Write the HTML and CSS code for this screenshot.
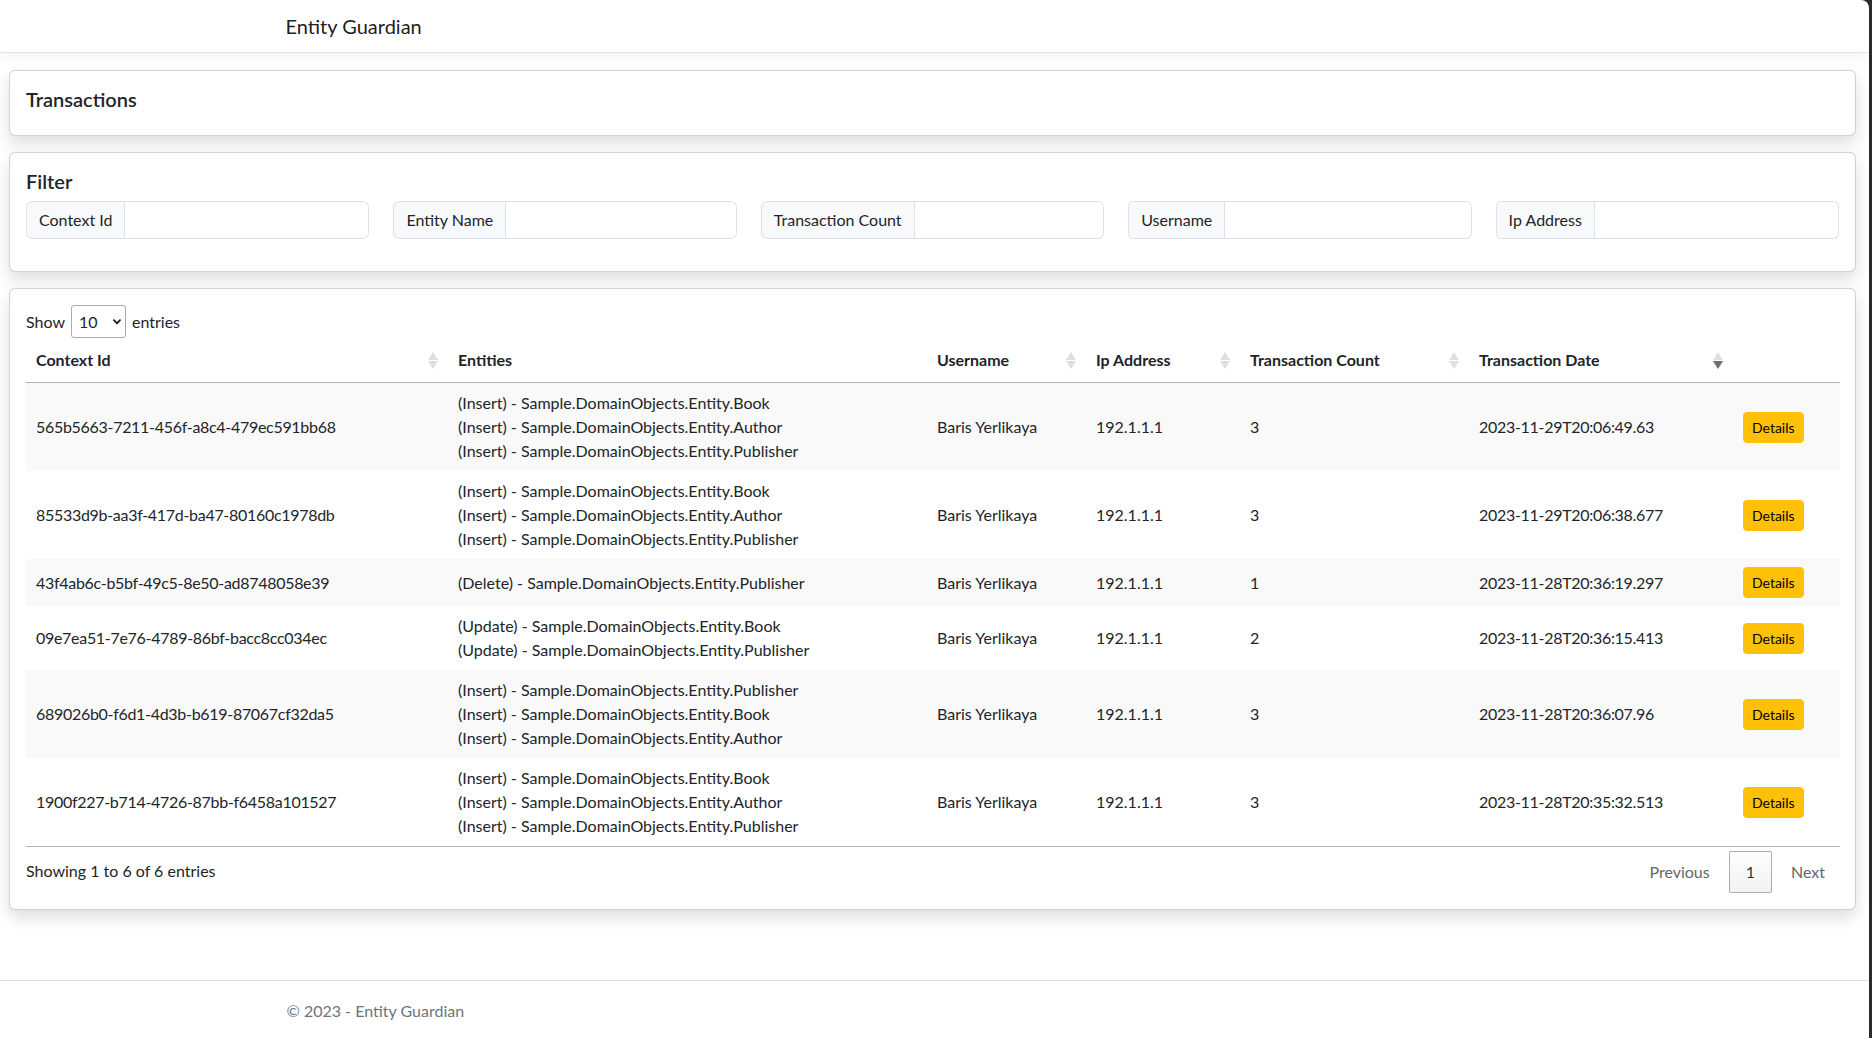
FILE: index.html
```html
<!DOCTYPE html>
<html lang="en">
<head>
<meta charset="utf-8">
<title>Transactions - Entity Guardian</title>
<link rel="stylesheet" href="styles.css">
</head>
<body>
<header class="topbar">
  <div class="container"><a class="brand" href="#">Entity Guardian</a></div>
</header>
<main class="main">
  <section class="card">
    <div class="card-body">
      <h5 class="card-title">Transactions</h5>
    </div>
  </section>
  <section class="card">
    <div class="card-body">
      <h5 class="card-title">Filter</h5>
      <div class="filter-grid">
        <div class="input-group"><span class="ig-label">Context Id</span><input class="ig-input" type="text"></div>
        <div class="input-group"><span class="ig-label">Entity Name</span><input class="ig-input" type="text"></div>
        <div class="input-group"><span class="ig-label">Transaction Count</span><input class="ig-input" type="text"></div>
        <div class="input-group"><span class="ig-label">Username</span><input class="ig-input" type="text"></div>
        <div class="input-group"><span class="ig-label">Ip Address</span><input class="ig-input" type="text"></div>
      </div>
    </div>
  </section>
  <section class="card">
    <div class="card-body">
      <div class="dt-length">
        <span>Show</span>
        <span class="select-wrap">
          <select class="dt-select"><option>10</option><option>25</option><option>50</option><option>100</option></select>
          <svg class="chev" viewBox="0 0 8 6" width="8" height="6"><path d="M1 1.2 L4 4.4 L7 1.2" fill="none" stroke="#222" stroke-width="1.9" stroke-linecap="round" stroke-linejoin="round"/></svg>
        </span>
        <span>entries</span>
      </div>
      <table class="dt">
        <colgroup>
          <col class="c-id"><col class="c-ent"><col class="c-user"><col class="c-ip"><col class="c-count"><col class="c-date"><col class="c-act">
        </colgroup>
        <thead>
          <tr>
            <th class="sortable">Context Id</th>
            <th>Entities</th>
            <th class="sortable">Username</th>
            <th class="sortable">Ip Address</th>
            <th class="sortable">Transaction Count</th>
            <th class="sortable sorted-desc">Transaction Date</th>
            <th></th>
          </tr>
        </thead>
        <tbody>
          <tr>
            <td class="num">565b5663-7211-456f-a8c4-479ec591bb68</td>
            <td><div>(Insert) - Sample.DomainObjects.Entity.Book</div><div>(Insert) - Sample.DomainObjects.Entity.Author</div><div>(Insert) - Sample.DomainObjects.Entity.Publisher</div></td>
            <td>Baris Yerlikaya</td>
            <td>192.1.1.1</td>
            <td>3</td>
            <td class="num">2023-11-29T20:06:49.63</td>
            <td><a class="btn-details" href="#">Details</a></td>
          </tr>
          <tr>
            <td class="num">85533d9b-aa3f-417d-ba47-80160c1978db</td>
            <td><div>(Insert) - Sample.DomainObjects.Entity.Book</div><div>(Insert) - Sample.DomainObjects.Entity.Author</div><div>(Insert) - Sample.DomainObjects.Entity.Publisher</div></td>
            <td>Baris Yerlikaya</td>
            <td>192.1.1.1</td>
            <td>3</td>
            <td class="num">2023-11-29T20:06:38.677</td>
            <td><a class="btn-details" href="#">Details</a></td>
          </tr>
          <tr>
            <td class="num">43f4ab6c-b5bf-49c5-8e50-ad8748058e39</td>
            <td><div>(Delete) - Sample.DomainObjects.Entity.Publisher</div></td>
            <td>Baris Yerlikaya</td>
            <td>192.1.1.1</td>
            <td>1</td>
            <td class="num">2023-11-28T20:36:19.297</td>
            <td><a class="btn-details" href="#">Details</a></td>
          </tr>
          <tr>
            <td class="num">09e7ea51-7e76-4789-86bf-bacc8cc034ec</td>
            <td><div>(Update) - Sample.DomainObjects.Entity.Book</div><div>(Update) - Sample.DomainObjects.Entity.Publisher</div></td>
            <td>Baris Yerlikaya</td>
            <td>192.1.1.1</td>
            <td>2</td>
            <td class="num">2023-11-28T20:36:15.413</td>
            <td><a class="btn-details" href="#">Details</a></td>
          </tr>
          <tr>
            <td class="num">689026b0-f6d1-4d3b-b619-87067cf32da5</td>
            <td><div>(Insert) - Sample.DomainObjects.Entity.Publisher</div><div>(Insert) - Sample.DomainObjects.Entity.Book</div><div>(Insert) - Sample.DomainObjects.Entity.Author</div></td>
            <td>Baris Yerlikaya</td>
            <td>192.1.1.1</td>
            <td>3</td>
            <td class="num">2023-11-28T20:36:07.96</td>
            <td><a class="btn-details" href="#">Details</a></td>
          </tr>
          <tr>
            <td class="num">1900f227-b714-4726-87bb-f6458a101527</td>
            <td><div>(Insert) - Sample.DomainObjects.Entity.Book</div><div>(Insert) - Sample.DomainObjects.Entity.Author</div><div>(Insert) - Sample.DomainObjects.Entity.Publisher</div></td>
            <td>Baris Yerlikaya</td>
            <td>192.1.1.1</td>
            <td>3</td>
            <td class="num">2023-11-28T20:35:32.513</td>
            <td><a class="btn-details" href="#">Details</a></td>
          </tr>
        </tbody>
      </table>
      <div class="dt-bottom">
        <div class="dt-info">Showing 1 to 6 of 6 entries</div>
        <div class="dt-paginate">
          <a class="pg-btn disabled">Previous</a>
          <a class="pg-btn current">1</a>
          <a class="pg-btn disabled">Next</a>
        </div>
      </div>
    </div>
  </section>
</main>
<footer class="footer">
  <div class="container">&copy; 2023 - Entity Guardian</div>
</footer>
</body>
</html>
```
FILE: styles.css
```css
html {
  background: #2b2b2b;
  height: 100%;
}

body {
  margin: 0 3px 0 0;
  min-height: 100vh;
  background: #fff;
  display: flex;
  flex-direction: column;
  font-family: "Segoe UI", Lato, "Noto Sans", sans-serif;
  font-size: 16px;
  line-height: 1.5;
  color: #212529;
  border-top-right-radius: 8px;
}

.container {
  width: 1320px;
  margin: 0 auto;
  padding: 0 12px;
  box-sizing: border-box;
}

.topbar {
  height: 52px;
  border-bottom: 1px solid #dee2e6;
  box-shadow: 0 4px 12px rgba(0, 0, 0, 0.05);
  display: flex;
  align-items: center;
  margin-bottom: 17px;
}

.brand {
  font-size: 20px;
  line-height: 30px;
  color: rgba(0, 0, 0, 0.9);
  text-decoration: none;
  margin-left: -1px;
}

.main {
  padding: 0 13px 0 9px;
}

.card {
  background: #fff;
  border: 1px solid rgba(0, 0, 0, 0.175);
  border-radius: 6px;
  box-shadow: 0 8px 16px rgba(0, 0, 0, 0.13);
  margin-bottom: 16px;
}

.card-body {
  padding: 16px;
}

.card-title {
  margin: 0 0 8px;
  font-size: 20px;
  font-weight: 600;
  line-height: 24px;
}

.filter-grid {
  display: grid;
  grid-template-columns: repeat(5, minmax(0, 1fr));
  gap: 24px;
  margin-bottom: 16px;
}

.input-group {
  display: flex;
  height: 38px;
  min-width: 0;
}

.ig-label {
  display: flex;
  align-items: center;
  padding: 0 12px;
  background: #f8f9fa;
  border: 1px solid #dee2e6;
  border-radius: 6px 0 0 6px;
  white-space: nowrap;
}

.ig-input {
  flex: 1 1 0;
  width: 0;
  min-width: 0;
  border: 1px solid #dee2e6;
  border-left: 0;
  border-radius: 0 6px 6px 0;
  padding: 0 12px;
  font: inherit;
  outline: none;
  background: #fff;
}

.dt-length {
  display: flex;
  align-items: center;
  gap: 6px;
  height: 33px;
}

.select-wrap {
  position: relative;
  display: inline-flex;
}

.dt-select {
  appearance: none;
  -webkit-appearance: none;
  width: 55px;
  height: 33px;
  border: 1px solid #aaa;
  border-radius: 3px;
  padding: 0 0 0 7px;
  background: transparent;
  font: inherit;
  color: #212529;
}

.chev {
  position: absolute;
  right: 5px;
  top: 14px;
  pointer-events: none;
}

.dt {
  width: 100%;
  table-layout: fixed;
  border-collapse: separate;
  border-spacing: 0;
  border-bottom: 1px solid rgba(0, 0, 0, 0.3);
}

.c-id { width: 422px; }
.c-ent { width: 479px; }
.c-user { width: 159px; }
.c-ip { width: 154px; }
.c-count { width: 229px; }
.c-date { width: 264px; }
.c-act { width: 107px; }

.dt th {
  position: relative;
  padding: 10px;
  text-align: left;
  font-weight: 700;
  line-height: 24px;
  border-bottom: 1px solid rgba(0, 0, 0, 0.3);
  white-space: nowrap;
}

.dt th.sortable::before,
.dt th.sortable::after {
  content: "";
  position: absolute;
  right: 10px;
  width: 0;
  height: 0;
  border-left: 5px solid transparent;
  border-right: 5px solid transparent;
}

.dt th.sortable::before {
  top: calc(50% - 8px);
  border-bottom: 8px solid #dfdfdf;
}

.dt th.sortable::after {
  top: calc(50% + 1px);
  border-top: 8px solid #dfdfdf;
}

.dt th.sorted-desc::after {
  border-top-color: #6f6f6f;
}

.dt td {
  padding: 8px 10px;
  line-height: 24px;
  vertical-align: middle;
}

.dt td.num {
  letter-spacing: -0.3px;
}

.dt tbody tr:nth-child(odd) td {
  background: #f9f9f9;
}

.btn-details {
  display: inline-block;
  padding: 4px 8px;
  font-size: 14px;
  line-height: 21px;
  color: #000;
  background: #ffc107;
  border: 1px solid #ffc107;
  border-radius: 4px;
  text-decoration: none;
  vertical-align: middle;
}

.dt-bottom {
  display: flex;
  justify-content: space-between;
  align-items: flex-start;
}

.dt-info {
  padding-top: 12px;
  line-height: 24px;
}

.dt-paginate {
  padding-top: 4px;
  display: flex;
  gap: 2px;
}

.pg-btn {
  display: inline-block;
  padding: 8px 16px;
  line-height: 24px;
  text-align: center;
  border: 1px solid transparent;
  border-radius: 2px;
  color: #333;
}

.pg-btn.disabled {
  color: #666;
}

.pg-btn.disabled:last-child {
  padding-right: 13px;
}

.pg-btn.current {
  color: #333;
  border: 1px solid rgba(0, 0, 0, 0.3);
  background: linear-gradient(to bottom, rgba(230, 230, 230, 0.05) 0%, rgba(0, 0, 0, 0.05) 100%);
}

.footer {
  margin-top: auto;
  border-top: 1px solid #dee2e6;
  padding-top: 2px;
  line-height: 55px;
  color: #6c757d;
  white-space: nowrap;
}
```
